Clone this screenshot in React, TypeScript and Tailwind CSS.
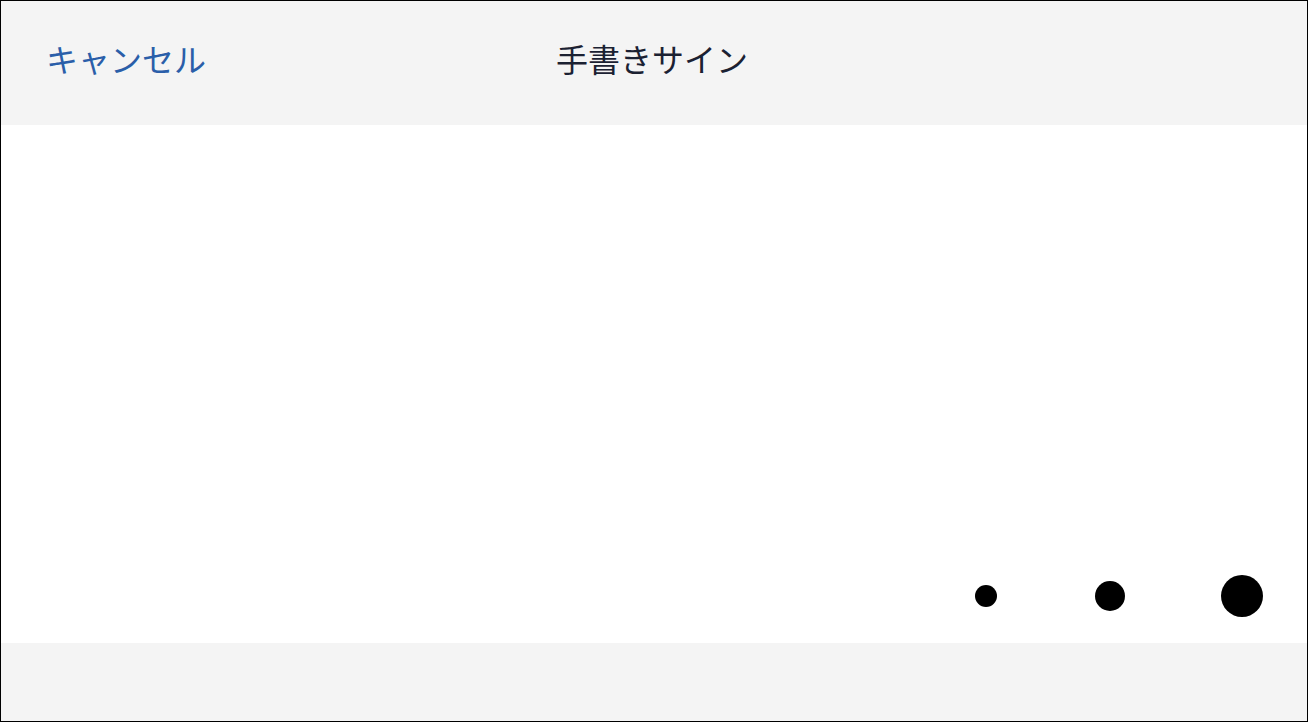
const jp = "font-['Noto_Sans_CJK_JP','Noto_Sans',sans-serif]"

const penSizes = [
  { id: 'thin', className: 'w-[22px] h-[22px]' },
  { id: 'medium', className: 'w-[30px] h-[30px]' },
  { id: 'thick', className: 'w-[42px] h-[42px]' },
]

export default function App() {
  return (
    <div className={`h-[722px] w-full border border-black flex flex-col bg-white ${jp}`}>
      <header className="relative h-[124px] shrink-0 bg-[#f4f4f4] flex items-center pb-[10px]">
        <button type="button" className="ml-[45px] text-[32px] leading-none text-[#2a5ea9] z-10">
          キャンセル
        </button>
        <h1 className="absolute inset-x-0 top-0 bottom-[10px] flex items-center justify-center text-[32px] leading-none font-normal text-[#1b2132] pr-[4px]">
          手書きサイン
        </h1>
      </header>

      <main className="flex-1 flex flex-col justify-end pb-[26px] pr-[44px]">
        <div className="flex items-center justify-end">
          {penSizes.map((size, index) => (
            <button
              key={size.id}
              type="button"
              aria-label={size.id}
              className={`rounded-full bg-black ${size.className} ${index === 0 ? '' : index === 1 ? 'ml-[98px]' : 'ml-[96px]'}`}
            />
          ))}
        </div>
      </main>

      <footer className="h-[78px] shrink-0 bg-[#f4f4f4]" />
    </div>
  )
}
